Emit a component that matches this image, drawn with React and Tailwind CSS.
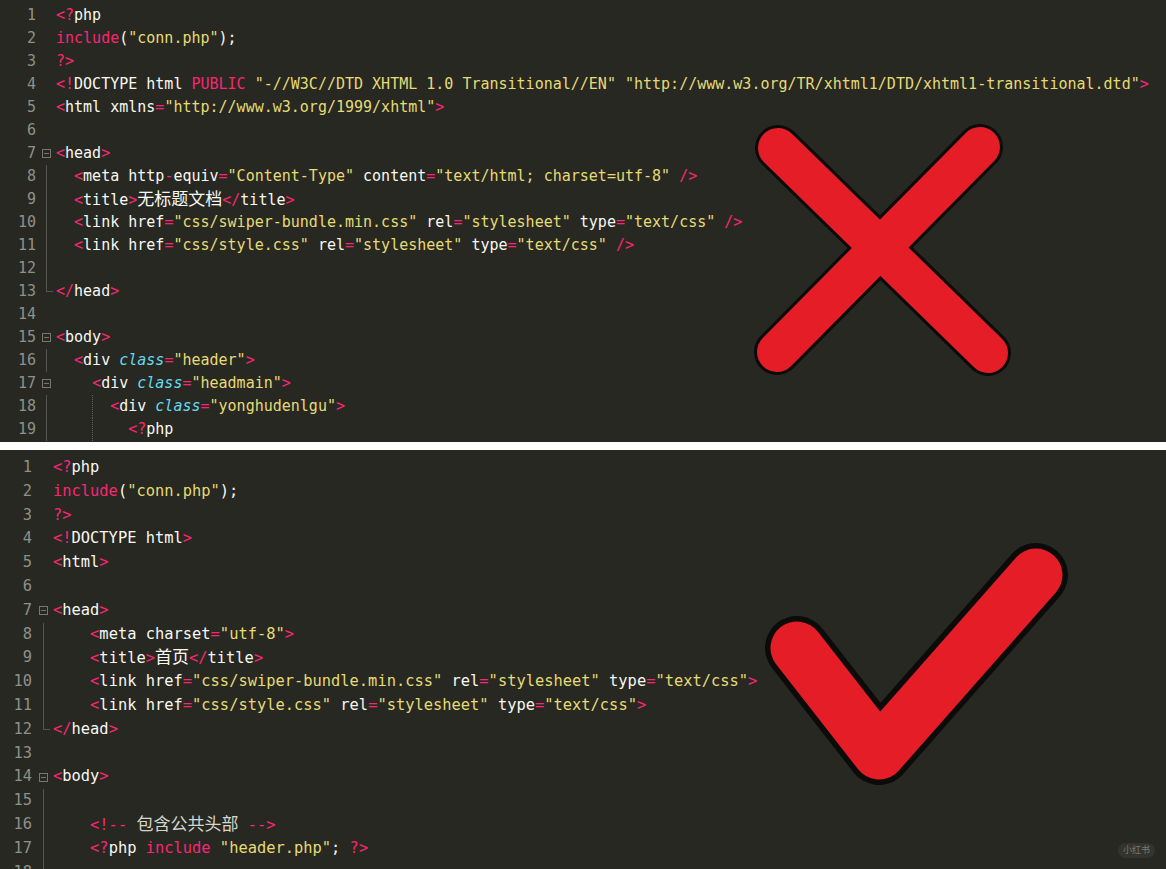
const COLORS = {
  p: 'text-[#f92672]',
  w: 'text-[#f8f8f2]',
  y: 'text-[#e6db74]',
  c: 'text-[#66d9ef] italic',
  z: 'text-[#f8f8f2] text-[17px]',
  g: 'text-[#d6d6ce] text-[17px]',
}

const tag = (name, close = false) => [['p', close ? '</' : '<'], ['w', name], ['p', '>']]
const attr = (name, value) => [['w', ' ' + name], ['p', '='], ['y', `"${value}"`]]

const topLines = [
  { fold: null, t: [['p', '<?'], ['w', 'php']] },
  { fold: null, t: [['p', 'include'], ['w', '('], ['y', '"conn.php"'], ['w', ');']] },
  { fold: null, t: [['p', '?>']] },
  {
    fold: null,
    t: [
      ['p', '<!'], ['w', 'DOCTYPE html '], ['p', 'PUBLIC'], ['w', ' '],
      ['y', '"-//W3C//DTD XHTML 1.0 Transitional//EN"'], ['w', ' '],
      ['y', '"http://www.w3.org/TR/xhtml1/DTD/xhtml1-transitional.dtd"'], ['p', '>'],
    ],
  },
  { fold: null, t: [['p', '<'], ['w', 'html'], ...attr('xmlns', 'http://www.w3.org/1999/xhtml'), ['p', '>']] },
  { fold: null, t: [] },
  { fold: 'box', t: tag('head') },
  {
    fold: 'bar',
    t: [
      ['w', '  '], ['p', '<'], ['w', 'meta http'], ['p', '-'], ['w', 'equiv'], ['p', '='], ['y', '"Content-Type"'],
      ...attr('content', 'text/html; charset=utf-8'), ['w', ' '], ['p', '/>'],
    ],
  },
  { fold: 'bar', t: [['w', '  '], ...tag('title'), ['z', '无标题文档'], ...tag('title', true)] },
  {
    fold: 'bar',
    t: [
      ['w', '  '], ['p', '<'], ['w', 'link'], ...attr('href', 'css/swiper-bundle.min.css'),
      ...attr('rel', 'stylesheet'), ...attr('type', 'text/css'), ['w', ' '], ['p', '/>'],
    ],
  },
  {
    fold: 'bar',
    t: [
      ['w', '  '], ['p', '<'], ['w', 'link'], ...attr('href', 'css/style.css'),
      ...attr('rel', 'stylesheet'), ...attr('type', 'text/css'), ['w', ' '], ['p', '/>'],
    ],
  },
  { fold: 'bar', t: [] },
  { fold: 'end', t: tag('head', true) },
  { fold: null, t: [] },
  { fold: 'box', t: tag('body') },
  { fold: 'bar', t: [['w', '  '], ['p', '<'], ['w', 'div '], ['c', 'class'], ['p', '='], ['y', '"header"'], ['p', '>']] },
  { fold: 'box', t: [['w', '    '], ['p', '<'], ['w', 'div '], ['c', 'class'], ['p', '='], ['y', '"headmain"'], ['p', '>']] },
  {
    fold: 'bar',
    t: [['w', '    '], ['|'], ['w', '  '], ['p', '<'], ['w', 'div '], ['c', 'class'], ['p', '='], ['y', '"yonghudenlgu"'], ['p', '>']],
  },
  { fold: 'bar', t: [['w', '    '], ['|'], ['w', '    '], ['p', '<?'], ['w', 'php']] },
]

const bottomLines = [
  { fold: null, t: [['p', '<?'], ['w', 'php']] },
  { fold: null, t: [['p', 'include'], ['w', '('], ['y', '"conn.php"'], ['w', ');']] },
  { fold: null, t: [['p', '?>']] },
  { fold: null, t: [['p', '<!'], ['w', 'DOCTYPE html'], ['p', '>']] },
  { fold: null, t: tag('html') },
  { fold: null, t: [] },
  { fold: 'box', t: tag('head') },
  { fold: 'bar', t: [['w', '    '], ['p', '<'], ['w', 'meta'], ...attr('charset', 'utf-8'), ['p', '>']] },
  { fold: 'bar', t: [['w', '    '], ...tag('title'), ['z', '首页'], ...tag('title', true)] },
  {
    fold: 'bar',
    t: [
      ['w', '    '], ['p', '<'], ['w', 'link'], ...attr('href', 'css/swiper-bundle.min.css'),
      ...attr('rel', 'stylesheet'), ...attr('type', 'text/css'), ['p', '>'],
    ],
  },
  {
    fold: 'bar',
    t: [
      ['w', '    '], ['p', '<'], ['w', 'link'], ...attr('href', 'css/style.css'),
      ...attr('rel', 'stylesheet'), ...attr('type', 'text/css'), ['p', '>'],
    ],
  },
  { fold: 'end', t: tag('head', true) },
  { fold: null, t: [] },
  { fold: 'box', t: tag('body') },
  { fold: 'bar', t: [] },
  { fold: 'bar', t: [['w', '    '], ['p', '<!--'], ['w', ' '], ['g', '包含公共头部'], ['w', ' '], ['p', '-->']] },
  {
    fold: 'bar',
    t: [['w', '    '], ['p', '<?'], ['w', 'php '], ['p', 'include'], ['w', ' '], ['y', '"header.php"'], ['w', '; '], ['p', '?>']],
  },
  { fold: 'bar', t: [] },
]

const variants = {
  top: {
    row: 'h-[23px] leading-[23px] text-[15px]',
    num: 'w-[36px]',
    fold: 'w-[20px]',
    box: 'ml-[6px]',
    bar: 'ml-[10px]',
  },
  bottom: {
    row: 'h-[23.8px] leading-[23.8px] text-[15.4px]',
    num: 'w-[32px]',
    fold: 'w-[21px]',
    box: 'ml-[7px]',
    bar: 'ml-[11px]',
  },
}

function Fold({ type, v }) {
  if (type === 'box') {
    return (
      <div className={`${v.box} w-[9px] h-[9px] border border-[#77776f] flex items-center justify-center`}>
        <div className="w-[5px] h-px bg-[#77776f]" />
      </div>
    )
  }
  if (type === 'bar') return <div className={`${v.bar} self-stretch border-l border-[#55554e]`} />
  if (type === 'end') return <div className={`${v.bar} self-start h-1/2 w-[7px] border-l border-b border-[#55554e]`} />
  return null
}

function CodeLine({ n, line, v }) {
  return (
    <div className={`flex ${v.row}`}>
      <div className={`${v.num} shrink-0 text-right text-[#8f908a]`}>{n}</div>
      <div className={`${v.fold} shrink-0 flex items-center h-full`}>
        <Fold type={line.fold} v={v} />
      </div>
      <div className="whitespace-pre">
        {line.t.map(([k, s], i) =>
          k === '|' ? (
            <span key={i} className="inline-block align-top h-full -mr-px border-l border-dotted border-[#5d5d56]" />
          ) : (
            <span key={i} className={COLORS[k]}>{s}</span>
          )
        )}
      </div>
    </div>
  )
}

function Cross() {
  return (
    <svg className="absolute left-[740px] top-[110px]" width="280" height="280" viewBox="0 0 280 280">
      <g stroke="#0b0b0a" strokeWidth="46" strokeLinecap="round">
        <line x1="38" y1="38" x2="248" y2="243" />
        <line x1="240" y1="37" x2="37" y2="242" />
      </g>
      <g stroke="#e41d26" strokeWidth="40" strokeLinecap="round">
        <line x1="38" y1="38" x2="248" y2="243" />
        <line x1="240" y1="37" x2="37" y2="242" />
      </g>
    </svg>
  )
}

function Check() {
  return (
    <svg className="absolute left-[740px] top-[50px]" width="360" height="300" viewBox="0 0 360 300">
      <polyline
        points="57,148 139,253 296,75"
        fill="none"
        stroke="#0b0b0a"
        strokeWidth="64"
        strokeLinecap="round"
        strokeLinejoin="round"
      />
      <polyline
        points="57,148 139,253 296,75"
        fill="none"
        stroke="#e41d26"
        strokeWidth="53"
        strokeLinecap="round"
        strokeLinejoin="round"
      />
    </svg>
  )
}

export default function App() {
  const mono = { fontFamily: '"DejaVu Sans Mono", "Noto Sans CJK SC", monospace' }
  return (
    <div className="w-[1166px] h-[869px] flex flex-col bg-white overflow-hidden" style={mono}>
      <div className="relative h-[442px] shrink-0 overflow-hidden bg-[#272822] pt-[4px]">
        {topLines.map((line, i) => (
          <CodeLine key={i} n={i + 1} line={line} v={variants.top} />
        ))}
        <Cross />
      </div>
      <div className="h-[8px] shrink-0 bg-white" />
      <div className="relative flex-1 overflow-hidden bg-[#272822] pt-[6px]">
        {bottomLines.map((line, i) => (
          <CodeLine key={i} n={i + 1} line={line} v={variants.bottom} />
        ))}
        <Check />
        <div className="absolute right-[11px] bottom-[11px] px-[5px] h-[15px] leading-[15px] rounded-full bg-[#34342e] text-[9px] text-[#7a7a72]">
          小红书
        </div>
      </div>
    </div>
  )
}
